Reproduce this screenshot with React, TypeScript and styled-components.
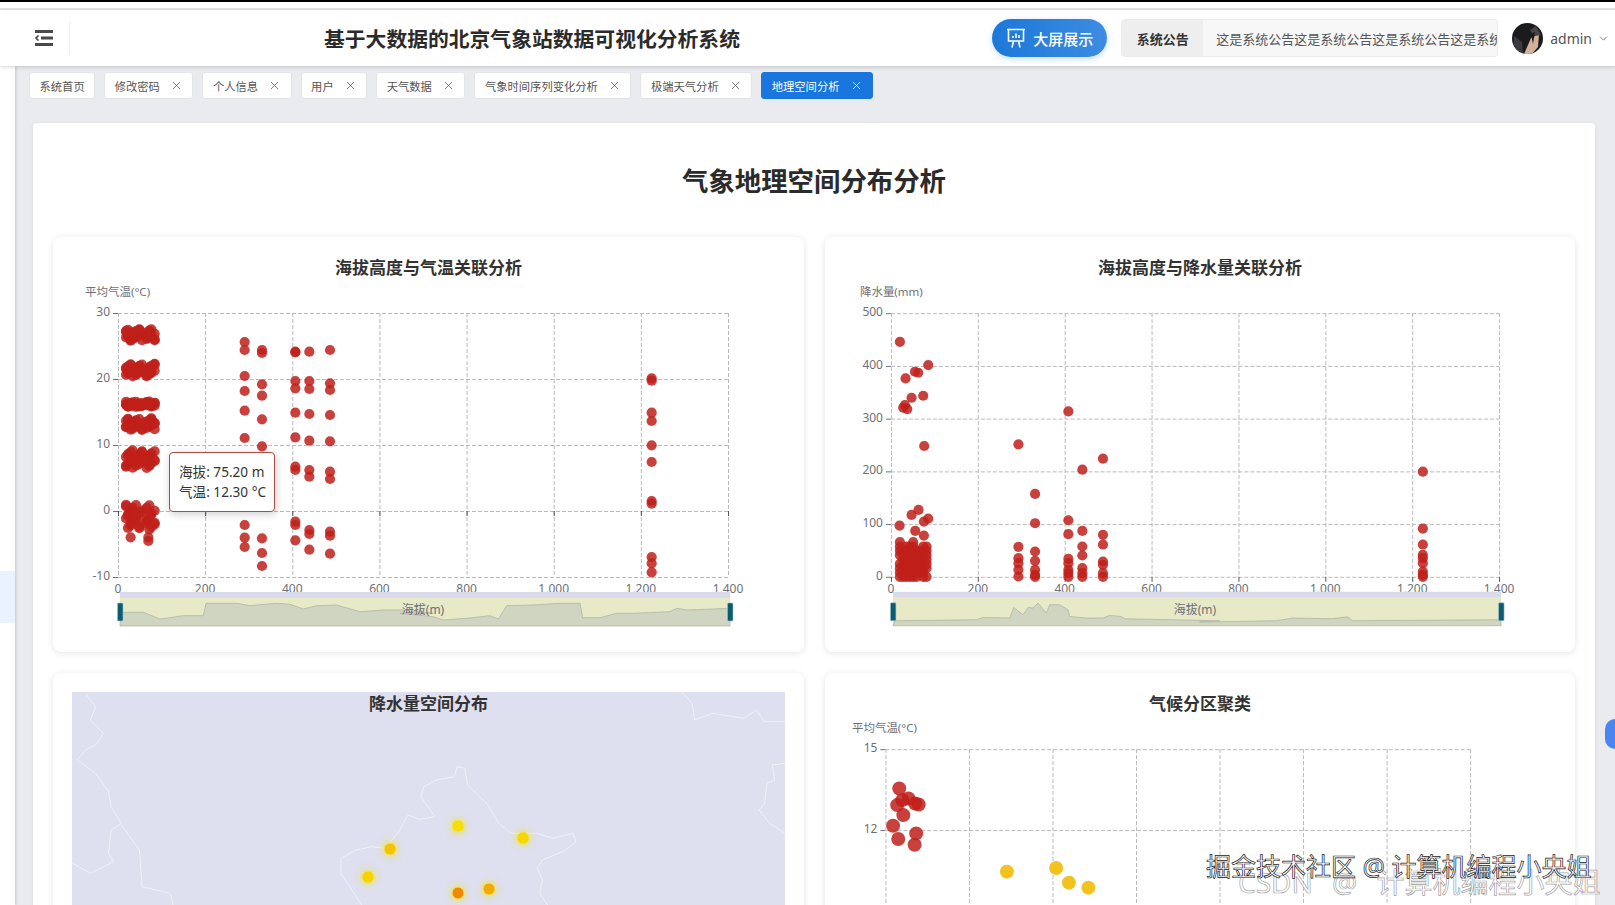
import React from 'react'
import styled, { createGlobalStyle } from 'styled-components'
import { ChevronDown, X } from 'lucide-react'

const FONT = `"Noto Sans", "Noto Sans CJK SC", "Liberation Sans", sans-serif`

const GlobalStyle = createGlobalStyle`
  html, body {
    margin: 0;
    height: 100%;
    overflow: hidden;
    font-family: ${FONT};
    background: #e9ebef;
  }
`

const Page = styled.div`
  position: relative;
  height: 905px;
  display: flex;
  flex-direction: column;
  overflow: hidden;
`

const BlackStrip = styled.div`
  height: 2px;
  background: #000;
  flex-shrink: 0;
`

const WhiteStrip = styled.div`
  height: 6px;
  background: #fff;
  border-bottom: 2px solid #e6e6e6;
  flex-shrink: 0;
`

const Header = styled.header`
  height: 56px;
  flex-shrink: 0;
  display: flex;
  align-items: center;
  background: #fff;
  padding-right: 5px;
  box-shadow: 0 1px 4px rgba(0, 0, 0, 0.18);
  position: relative;
  z-index: 2;
`

const FoldButton = styled.div`
  width: 70px;
  height: 33px;
  display: flex;
  align-items: center;
  padding-left: 35px;
  box-sizing: border-box;
  border-right: 1px solid #efefef;
  color: #4a4a4a;
`

const SystemTitle = styled.h1`
  margin: 0 0 0 254px;
  font-size: 20.8px;
  font-weight: 700;
  color: #2b2b2b;
  white-space: nowrap;
`

const HeaderRight = styled.div`
  margin-left: auto;
  display: flex;
  align-items: center;
`

const BigScreenButton = styled.button`
  width: 115px;
  height: 38px;
  border: 0;
  border-radius: 19px;
  background: linear-gradient(90deg, #1c78d8, #3c8ce2);
  color: #fff;
  font: 500 15px ${FONT};
  display: flex;
  align-items: center;
  justify-content: center;
  gap: 7px;
  padding: 0;
  box-shadow: 0 2px 6px rgba(30, 120, 216, 0.25);
`

const Notice = styled.div`
  margin-left: 14px;
  width: 377px;
  height: 38px;
  display: flex;
  box-sizing: border-box;
  border: 1px solid #ececec;
  border-radius: 4px;
  background: #f7f7f7;
  overflow: hidden;
`

const NoticeLabel = styled.div`
  width: 81px;
  flex-shrink: 0;
  background: #eeeeee;
  display: flex;
  align-items: center;
  justify-content: center;
  font-size: 13px;
  font-weight: 700;
  color: #333;
`

const NoticeText = styled.div`
  padding-left: 13px;
  display: flex;
  align-items: center;
  font-size: 13px;
  color: #555;
  white-space: nowrap;
  overflow: hidden;
`

const Avatar = styled.svg`
  margin-left: 14px;
  width: 31px;
  height: 31px;
  flex-shrink: 0;
`

const UserName = styled.span`
  margin-left: 7px;
  font-size: 14px;
  color: #555;
`

const UserChevron = styled(ChevronDown)`
  margin-left: 5px;
  color: #666;
`

const Body = styled.div`
  flex: 1;
  min-height: 0;
  display: flex;
`

const SideRail = styled.aside`
  width: 15px;
  flex-shrink: 0;
  background: #fff;
  box-shadow: 1px 0 3px rgba(0, 0, 0, 0.16);
  padding-top: 505px;
  box-sizing: border-box;
`

const RailActive = styled.div`
  height: 52px;
  background: #eaf2fd;
`

const Main = styled.main`
  flex: 1;
  min-width: 0;
  overflow: hidden;
`

const TabBar = styled.nav`
  display: flex;
  gap: 9px;
  padding: 6px 0 0 14px;
`

const Tab = styled.div<{ $active?: boolean }>`
  height: 27px;
  box-sizing: border-box;
  padding: 0 9.5px;
  display: flex;
  align-items: center;
  gap: 10px;
  font-size: 11.3px;
  white-space: nowrap;
  border-radius: 3px;
  background: ${p => (p.$active ? '#1976de' : '#fff')};
  color: ${p => (p.$active ? '#fff' : '#555')};
  border: 1px solid ${p => (p.$active ? '#1976de' : '#e2e4e8')};
`

const Sheet = styled.section`
  margin: 24px 20px 0 18px;
  padding: 20px;
  background: #fff;
  border-radius: 4px;
  box-shadow: 0 1px 4px rgba(0, 0, 0, 0.08);
  box-sizing: border-box;
  height: 900px;
`

const SheetTitle = styled.h2`
  margin: 20px 0 38px;
  height: 36px;
  line-height: 36px;
  text-align: center;
  font-size: 26.4px;
  font-weight: 700;
  color: #2b2b2b;
`

const ChartGrid = styled.div`
  display: grid;
  grid-template-columns: 751px 750px;
  gap: 21px;
`

const ChartCard = styled.article`
  height: 415px;
  padding: 19px;
  box-sizing: border-box;
  background: #fff;
  border-radius: 8px;
  box-shadow: 0 1px 7px rgba(0, 0, 0, 0.11);
`

const ChartPanel = styled.div`
  position: relative;
  height: 377px;
`

const ChartTitle = styled.h3`
  position: absolute;
  top: 0;
  left: 0;
  right: 0;
  margin: 0;
  line-height: 24px;
  text-align: center;
  font-size: 17px;
  font-weight: 700;
  color: #333;
`

const ChartSvg = styled.svg`
  display: block;
  width: 100%;
  height: 377px;
  font-family: ${FONT};
  font-size: 12px;
`

const Tooltip = styled.div`
  position: absolute;
  left: 97px;
  top: 196px;
  width: 106px;
  height: 60px;
  box-sizing: border-box;
  padding: 8.5px 9px;
  background: #fff;
  border: 1.5px solid #b04a45;
  border-radius: 4px;
  box-shadow: 1px 2px 8px rgba(0, 0, 0, 0.2);
  font-size: 13.6px;
  line-height: 20px;
  color: #333;
  white-space: nowrap;
`

const MapSurface = styled.svg`
  display: block;
  width: 713px;
  height: 377px;
  background: #dedfef;
`

const WatermarkTop = styled.div`
  position: absolute;
  left: 1206px;
  top: 848px;
  font-size: 25px;
  line-height: 36px;
  white-space: nowrap;
  color: #fff;
  -webkit-text-stroke: 0.7px #222;
  z-index: 4;
`

const WatermarkBack = styled(WatermarkTop)`
  left: 1238px;
  top: 862px;
  font-size: 28px;
  line-height: 40px;
  word-spacing: 12px;
  color: rgba(255, 255, 255, 0.5);
  -webkit-text-stroke: 0.7px rgba(130, 130, 130, 0.75);
  z-index: 3;
`

const EdgeButton = styled.div`
  position: absolute;
  right: 0;
  top: 719px;
  width: 10px;
  height: 30px;
  border-radius: 15px 0 0 15px;
  background: #4a86f0;
  z-index: 3;
`

type Pt = [number, number]

// points below were read from the reference crops, hence the scale helpers
const z1 = (x: number, y: number): Pt => [x / 3 - 22, y / 3 - 21]
const z1r = (x: number, y: number): Pt => [x / 3 + 328, y / 3 - 21]
const z2 = (x: number, y: number): Pt => [x / 3 - 24, y / 3 - 21]
const z2r = (x: number, y: number): Pt => [x / 3 + 356, y / 3 - 21]
const col = (f: (x: number, y: number) => Pt, x: number, ys: number[]) => ys.map(y => f(x, y))

const DENSE_X = [228, 234, 242, 248, 258, 268, 276, 290, 298, 304, 314]

const denseBand = (y0: number, y1: number, seed: number): Pt[] => {
  const out: Pt[] = []
  DENSE_X.forEach((x, i) => {
    for (let j = 0; j < 3; j++) {
      const t = ((i * 37 + j * 53 + seed * 17) % 100) / 100
      out.push(z1(x, y0 + t * (y1 - y0)))
    }
  })
  return out
}

const tempPoints: Pt[] = [
  ...denseBand(282, 318, 1),
  ...denseBand(385, 424, 2),
  ...denseBand(500, 516, 3),
  ...denseBand(550, 586, 4),
  ...denseBand(645, 700, 5),
  ...denseBand(808, 885, 6),
  z1(242, 907),
  z1(295, 907),
  z1(295, 918),
  ...col(z1, 584, [321, 345, 423, 468, 527, 609, 870, 908, 936]),
  ...col(z1, 636, [345, 354, 448, 482, 553, 634, 910, 954, 993]),
  ...col(z1, 736, [350, 352, 438, 460, 533, 607, 695, 705, 860, 870, 916]),
  ...col(z1, 778, [350, 438, 462, 537, 617, 705, 725, 885, 897, 944]),
  ...col(z1, 840, [345, 445, 465, 540, 619, 710, 732, 890, 902, 956]),
  ...col(z1r, 755, [430, 437, 533, 558, 631, 681, 798, 806, 966, 985, 1012]),
]

const rainBase = (): Pt[] => {
  const out: Pt[] = []
  for (let x = 240; x <= 326; x += 10) {
    const top = 915 + ((x * 7) % 40)
    for (let y = 1026; y >= top; y -= 13) {
      if ((x + y) % 7 !== 3) out.push(z2(x, y))
    }
  }
  return out
}

const rainPoints: Pt[] = [
  ...rainBase(),
  ...[
    [240, 320], [325, 390], [285, 410], [295, 413], [257, 430], [275, 488], [310, 482], [250, 518],
    [255, 510], [262, 522], [313, 633], [596, 628], [746, 529], [850, 671], [788, 704], [646, 777],
    [239, 872], [275, 840], [296, 825], [312, 860], [325, 851], [286, 888], [312, 902], [646, 865],
    [746, 856], [746, 898], [788, 888], [850, 900], [850, 929], [788, 935], [788, 962], [596, 936],
    [646, 950],
  ].map(([x, y]) => z2(x, y)),
  ...col(z2, 596, [970, 985, 1005, 1025]),
  ...col(z2, 646, [978, 1005, 1020, 1026]),
  ...col(z2, 746, [972, 985, 1005, 1015, 1026]),
  ...col(z2, 788, [1000, 1015, 1026]),
  ...col(z2, 850, [980, 990, 1015, 1026]),
  ...col(z2r, 671, [710, 881, 929, 960, 970, 985, 1010, 1020, 1026]),
]

const toPath = (pts: Pt[], close = false) =>
  'M' + pts.map(p => `${p[0].toFixed(1)} ${p[1].toFixed(1)}`).join('L') + (close ? 'Z' : '')

const tempShadow: Pt[] = [
  ...[
    [212, 1132], [280, 1132], [330, 1152], [360, 1148], [400, 1142], [460, 1142], [468, 1105], [560, 1105],
    [600, 1112], [680, 1105], [720, 1108], [760, 1122], [800, 1112], [860, 1110], [930, 1130], [1000, 1125],
    [1060, 1125], [1150, 1135],
  ].map(([x, y]) => z1(x, y)),
  ...[
    [0, 1135], [100, 1145], [130, 1155], [200, 1150], [270, 1142], [295, 1152], [320, 1112], [400, 1110],
    [480, 1105], [540, 1105], [548, 1148], [600, 1148], [650, 1135], [700, 1135], [810, 1130], [830, 1120],
    [860, 1125], [990, 1120],
  ].map(([x, y]) => z1r(x, y)),
]

const rainShadow: Pt[] = [
  ...[
    [225, 1158], [470, 1155], [490, 1148], [570, 1150], [582, 1118], [610, 1140], [625, 1118], [640, 1120],
    [655, 1105], [680, 1135], [690, 1110], [720, 1110], [745, 1125], [750, 1145], [800, 1150], [850, 1150],
    [870, 1142], [905, 1145], [915, 1152], [1200, 1158],
  ].map(([x, y]) => z2(x, y)),
  ...[
    [0, 1162], [230, 1158], [280, 1150], [400, 1152], [445, 1146], [460, 1158], [905, 1155],
  ].map(([x, y]) => z2r(x, y)),
]

const GRID = '#bababa'
const AXIS_TEXT = '#6e7079'

interface PlotProps {
  left: number
  right: number
  top: number
  bottom: number
  xTicks: string[]
  yTicks: string[]
  yName: string
  yNameX: number
  zeroRow?: number
  points: Pt[]
  radius?: number
  slider?: Pt[]
  extra?: React.ReactNode
}

const ScatterPlot: React.FC<PlotProps> = ({
  left, right, top, bottom, xTicks, yTicks, yName, yNameX, zeroRow, points, radius = 5.1, slider, extra,
}) => {
  const xStep = (right - left) / (xTicks.length - 1)
  const yStep = (bottom - top) / (yTicks.length - 1)
  const zeroY = top + yStep * (zeroRow ?? yTicks.length - 1)
  return (
    <ChartSvg viewBox="0 0 713 377">
      <text x={yNameX} y={40} fontSize={11.5} fill={AXIS_TEXT}>{yName}</text>
      {yTicks.map((t, i) => {
        const y = top + yStep * i
        return (
          <g key={t}>
            <line x1={left} x2={right} y1={y + 0.5} y2={y + 0.5} stroke={GRID} strokeDasharray="4 2" />
            <line x1={left - 5} x2={left} y1={y + 0.5} y2={y + 0.5} stroke={AXIS_TEXT} />
            <text x={left - 8} y={y + 3} textAnchor="end" fill={AXIS_TEXT}>{t}</text>
          </g>
        )
      })}
      {xTicks.map((t, i) => {
        const x = left + xStep * i
        return (
          <g key={i}>
            <line x1={x + 0.5} x2={x + 0.5} y1={top} y2={bottom} stroke={GRID} strokeDasharray="4 2" />
            <line x1={x + 0.5} x2={x + 0.5} y1={zeroY} y2={zeroY + 5} stroke="#555" />
            <text x={x} y={337} textAnchor="middle" fill={AXIS_TEXT}>{t}</text>
          </g>
        )
      })}
      {points.map((p, i) => (
        <circle key={i} cx={p[0]} cy={p[1]} r={radius} fill="#c0201a" fillOpacity={0.85} />
      ))}
      {extra}
      {slider && (
        <g>
          <rect x={left + 2} y={336} width={right - left} height={6} fill="#d9dbeb" />
          <rect x={left + 2} y={342} width={right - left} height={28} fill="#e8e9c6" />
          <path
            d={`${toPath(slider)}L${right + 2} 370L${left + 2} 370Z`}
            fill="#cfd5c0"
            stroke="#aeb6a4"
            strokeWidth={0.8}
          />
          <text x={(left + right) / 2} y={358} textAnchor="middle" fill={AXIS_TEXT}>海拔(m)</text>
          {[left - 0.5, right - 0.5].map(x => (
            <rect key={x} x={x} y={347} width={5.5} height={18} rx={1} fill="#0d5b70" stroke="#9fc3cc" strokeWidth={0.6} />
          ))}
        </g>
      )}
    </ChartSvg>
  )
}

const FoldIcon = () => (
  <svg width="18" height="16" viewBox="0 0 18 16" fill="none" stroke="currentColor">
    <path d="M0 1.5H18M6 8H18M0 14.5H18" strokeWidth="3" />
    <path d="M3.5 5.5L1 8L3.5 10.5" strokeWidth="1.6" />
  </svg>
)

const BoardIcon = () => (
  <svg width="20" height="21" viewBox="0 0 20 21" fill="none" stroke="#fff" strokeWidth="1.6">
    <path d="M1 1.5H19M2.5 1.5V13H17.5V1.5M7.5 13L6 19.5M12.5 13L14 19.5" />
    <path d="M7 10V8M10 10V5.5M13 10V7" />
  </svg>
)

const AvatarArt = () => (
  <Avatar viewBox="0 0 31 31">
    <defs>
      <clipPath id="avatar-clip">
        <circle cx="15.5" cy="15.5" r="15.5" />
      </clipPath>
    </defs>
    <g clipPath="url(#avatar-clip)">
      <rect width="31" height="31" fill="#1b1a1c" />
      <path d="M2 13L10 19L11 31H1Z" fill="#3a3a3f" />
      <path d="M12 31L19 15L27 11L26 24L20 31Z" fill="#d3b09a" />
      <path d="M18 7L24 3L29 12L22 13Z" fill="#4b4248" />
      <path d="M19 11L21 21L23 9Z" fill="#1b1a1c" />
    </g>
  </Avatar>
)

const MapLines: Pt[][] = [
  [[700, 735], [660, 640], [660, 595], [690, 570], [720, 560], [745, 565], [770, 520], [790, 465], [812, 478], [842, 470], [815, 410], [820, 380], [845, 360], [880, 350], [885, 320], [900, 325], [905, 375], [945, 435], [965, 490], [990, 520], [1040, 520], [1070, 535], [1110, 520], [1115, 545], [1090, 575], [1050, 600], [1040, 625], [1050, 660], [1045, 700], [1060, 735]],
  [[165, 100], [185, 140], [175, 180], [200, 220], [185, 255], [165, 270], [150, 300], [185, 340], [210, 395], [215, 440], [235, 490], [215, 510], [210, 580], [220, 605], [175, 640], [140, 610]],
  [[235, 495], [270, 570], [275, 680], [330, 700], [335, 735]],
  [[1320, 96], [1340, 130], [1345, 180], [1380, 160], [1440, 175], [1465, 150], [1480, 185], [1520, 185]],
  [[1520, 310], [1495, 315], [1500, 360], [1485, 370], [1480, 430], [1470, 450], [1490, 490], [1520, 520]],
]

const mapStations: { x: number; y: number; fill: string }[] = [
  { x: 386, y: 134, fill: '#f6dc08' },
  { x: 451, y: 146, fill: '#f6d800' },
  { x: 318, y: 157, fill: '#f4c400' },
  { x: 296, y: 185, fill: '#f6d400' },
  { x: 386, y: 201, fill: '#f08a00' },
  { x: 417, y: 197, fill: '#f5a800' },
]

const RainMap = () => (
  <MapSurface viewBox="0 0 713 377">
    <defs>
      <filter id="station-glow" x="-100%" y="-100%" width="300%" height="300%">
        <feGaussianBlur stdDeviation="2.5" />
      </filter>
    </defs>
    {MapLines.map((line, i) => (
      <path
        key={i}
        d={toPath(line.map(([x, y]) => [x / 1.936 - 72, y / 3 - 32] as Pt))}
        fill="none"
        stroke="#fff"
        strokeOpacity={0.55}
        strokeWidth={1}
      />
    ))}
    {mapStations.map(s => (
      <g key={s.x}>
        <circle cx={s.x} cy={s.y} r={9.5} fill="#e8e36a" fillOpacity={0.55} filter="url(#station-glow)" />
        <circle cx={s.x} cy={s.y} r={6} fill={s.fill} stroke="#f5e25a" strokeWidth={1} />
      </g>
    ))}
  </MapSurface>
)

const clusterPoints: Pt[] = [
  [174, 385], [170, 435], [192, 415], [212, 433], [180, 420], [205, 430], [182, 465], [162, 497], [172, 537], [207, 520], [204, 554],
].map(([x, y]) => [x / 1.948 - 34, y / 3 - 32] as Pt)

const climateYellow: Pt[] = [
  [384, 635], [480, 624], [505, 668], [543, 683],
].map(([x, y]) => [x / 1.948 - 34, y / 3 - 32] as Pt)

const TABS = [
  { label: '系统首页' },
  { label: '修改密码', closable: true },
  { label: '个人信息', closable: true },
  { label: '用户', closable: true },
  { label: '天气数据', closable: true },
  { label: '气象时间序列变化分析', closable: true },
  { label: '极端天气分析', closable: true },
  { label: '地理空间分析', closable: true, active: true },
]

const X_TICKS = ['0', '200', '400', '600', '800', '1,000', '1,200', '1,400']

export default function App() {
  return (
    <Page>
      <GlobalStyle />
      <BlackStrip />
      <WhiteStrip />
      <Header>
        <FoldButton>
          <FoldIcon />
        </FoldButton>
        <SystemTitle>基于大数据的北京气象站数据可视化分析系统</SystemTitle>
        <HeaderRight>
          <BigScreenButton>
            <BoardIcon />
            大屏展示
          </BigScreenButton>
          <Notice>
            <NoticeLabel>系统公告</NoticeLabel>
            <NoticeText>这是系统公告这是系统公告这是系统公告这是系统公告</NoticeText>
          </Notice>
          <AvatarArt />
          <UserName>admin</UserName>
          <UserChevron size={13} strokeWidth={1.5} />
        </HeaderRight>
      </Header>
      <Body>
        <SideRail>
          <RailActive />
        </SideRail>
        <Main>
          <TabBar>
            {TABS.map(t => (
              <Tab key={t.label} $active={t.active}>
                {t.label}
                {t.closable && <X size={13} strokeWidth={1.4} />}
              </Tab>
            ))}
          </TabBar>
          <Sheet>
            <SheetTitle>气象地理空间分布分析</SheetTitle>
            <ChartGrid>
              <ChartCard>
                <ChartPanel>
                  <ChartTitle>海拔高度与气温关联分析</ChartTitle>
                  <ScatterPlot
                    left={46}
                    right={656}
                    top={57}
                    bottom={321}
                    xTicks={X_TICKS}
                    yTicks={['30', '20', '10', '0', '-10']}
                    zeroRow={3}
                    yName="平均气温(°C)"
                    yNameX={13}
                    points={tempPoints}
                    slider={tempShadow}
                  />
                  <Tooltip>
                    海拔: 75.20 m
                    <br />
                    气温: 12.30 °C
                  </Tooltip>
                </ChartPanel>
              </ChartCard>
              <ChartCard>
                <ChartPanel>
                  <ChartTitle>海拔高度与降水量关联分析</ChartTitle>
                  <ScatterPlot
                    left={47}
                    right={656}
                    top={57}
                    bottom={321}
                    xTicks={X_TICKS}
                    yTicks={['500', '400', '300', '200', '100', '0']}
                    yName="降水量(mm)"
                    yNameX={16}
                    points={rainPoints}
                    slider={rainShadow}
                  />
                </ChartPanel>
              </ChartCard>
              <ChartCard>
                <ChartPanel>
                  <RainMap />
                  <ChartTitle>降水量空间分布</ChartTitle>
                </ChartPanel>
              </ChartCard>
              <ChartCard>
                <ChartPanel>
                  <ChartTitle>气候分区聚类</ChartTitle>
                  <ScatterPlot
                    left={41.5}
                    right={627}
                    top={57}
                    bottom={300}
                    xTicks={['', '', '', '', '', '', '', '']}
                    yTicks={['15', '12', '9', '6']}
                    yName="平均气温(°C)"
                    yNameX={8}
                    points={clusterPoints}
                    radius={7}
                    extra={climateYellow.map((p, i) => (
                      <circle key={i} cx={p[0]} cy={p[1]} r={7} fill="#f2c31e" />
                    ))}
                  />
                </ChartPanel>
              </ChartCard>
            </ChartGrid>
          </Sheet>
        </Main>
      </Body>
      <WatermarkBack>CSDN @ 计算机编程小央姐</WatermarkBack>
      <WatermarkTop>掘金技术社区 @ 计算机编程小央姐</WatermarkTop>
      <EdgeButton />
    </Page>
  )
}
